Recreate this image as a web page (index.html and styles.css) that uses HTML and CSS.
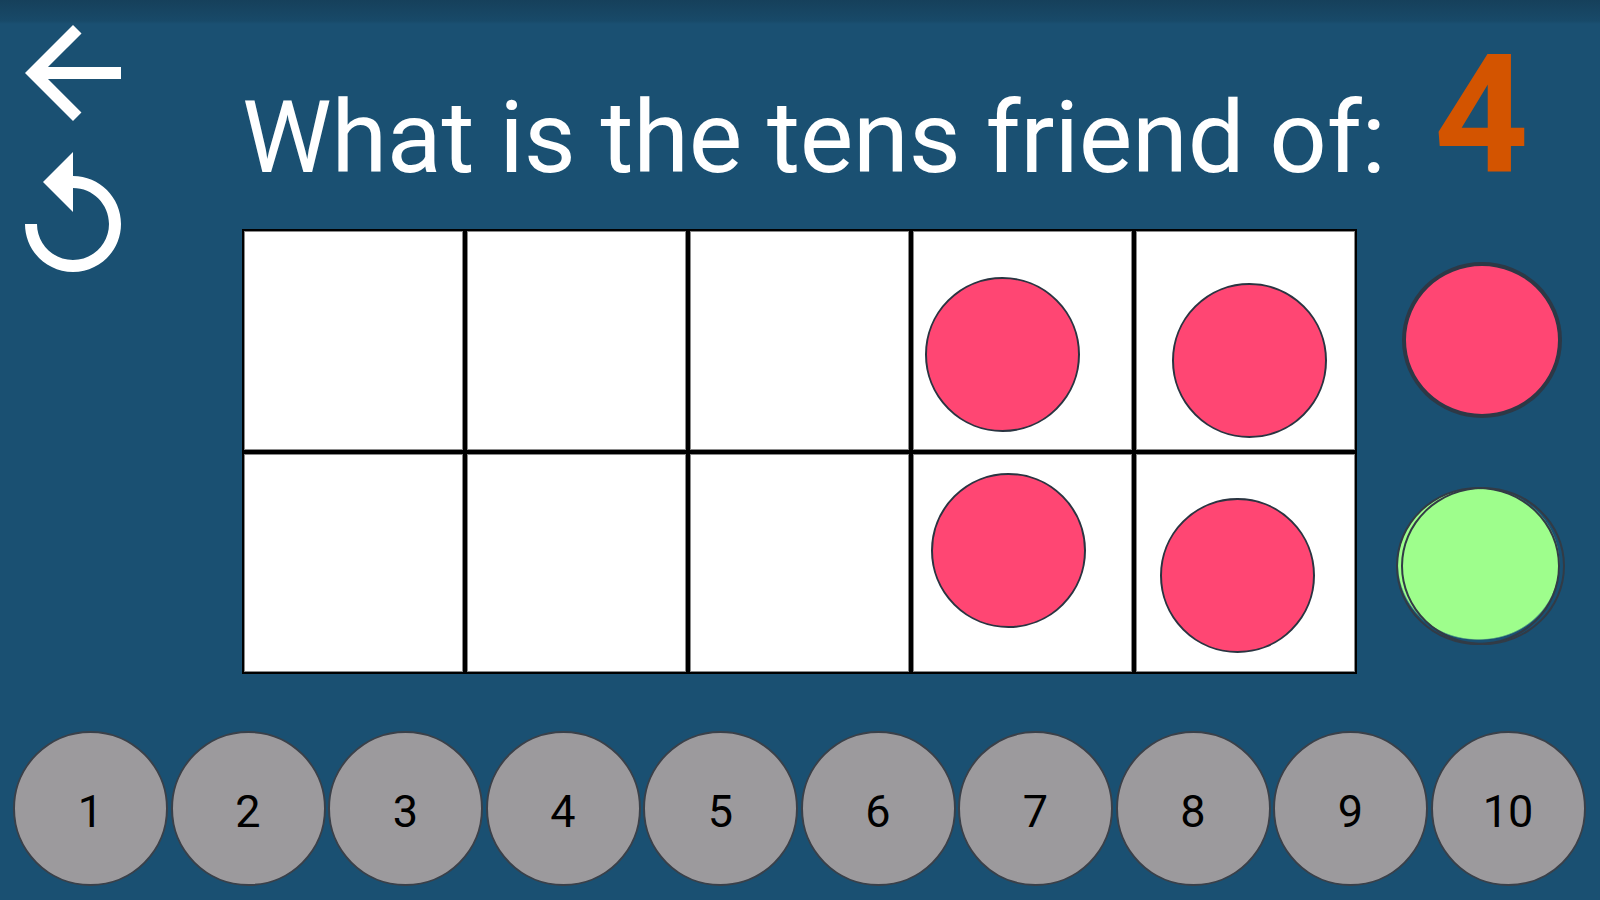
FILE: index.html
```html
<!DOCTYPE html>
<html lang="en">
<head>
  <meta charset="UTF-8">
  <meta name="viewport" content="width=device-width, initial-scale=1">
  <title>Tens Friend</title>
  <link rel="stylesheet" href="styles.css">
</head>
<body>

  <div class="screen">

    <!-- Ferramentas da esquerda -->
    <div class="tools">
      <button class="tool-btn" aria-label="Back">
        <svg viewBox="0 0 24 24" width="144" height="144"><path fill="#fff" d="M20 11H7.83l5.59-5.59L12 4l-8 8 8 8 1.41-1.41L7.83 13H20v-2z"/></svg>
      </button>
      <button class="tool-btn" aria-label="Replay">
        <svg viewBox="0 0 24 24" width="144" height="144"><path fill="#fff" d="M12 5V1L7 6l5 5V7c3.31 0 6 2.69 6 6s-2.69 6-6 6-6-2.69-6-6H4c0 4.42 3.58 8 8 8s8-3.58 8-8-3.58-8-8-8z"/></svg>
      </button>
    </div>

    <!-- Pergunta -->
    <div class="question">
      <span class="question-text">What is the tens friend of:</span>
      <span class="question-num">4</span>
    </div>

    <!-- Ten frame -->
    <div class="ten-frame">
      <div class="cell"></div>
      <div class="cell"></div>
      <div class="cell"></div>
      <div class="cell"><span class="counter" style="left: 12px; top: 46px;"></span></div>
      <div class="cell"><span class="counter" style="left: 36px; top: 52px;"></span></div>
      <div class="cell"></div>
      <div class="cell"></div>
      <div class="cell"></div>
      <div class="cell"><span class="counter" style="left: 18px; top: 19px;"></span></div>
      <div class="cell"><span class="counter" style="left: 24px; top: 44px;"></span></div>
    </div>

    <!-- Fichas -->
    <div class="supply">
      <span class="chip chip-red"></span>
      <span class="chip chip-green"></span>
    </div>

    <!-- Respostas -->
    <div class="answers">
      <button class="answer">1</button>
      <button class="answer">2</button>
      <button class="answer">3</button>
      <button class="answer">4</button>
      <button class="answer">5</button>
      <button class="answer">6</button>
      <button class="answer">7</button>
      <button class="answer">8</button>
      <button class="answer">9</button>
      <button class="answer">10</button>
    </div>

  </div>

</body>
</html>
```

FILE: styles.css
```css
/* Reset */
* { margin: 0; padding: 0; box-sizing: border-box; }
body {
  font-family: 'Roboto', 'Liberation Sans', sans-serif;
  background: #1a5072;
  overflow: hidden;
}
button { font-family: inherit; border: none; background: none; cursor: pointer; }

/* Tela principal */
.screen {
  width: 1600px;
  height: 900px;
  display: grid;
  grid-template-columns: 242px 1115px 1fr;
  grid-template-rows: 229px 445px 1fr;
  background: linear-gradient(to bottom, #16405b 0, #184a69 21px, #1a5072 24px, #1a5072 100%);
}

/* Ferramentas */
.tools {
  grid-column: 1;
  grid-row: 1 / 3;
  display: flex;
  flex-direction: column;
  padding: 1px 0 0 1px;
}
.tool-btn { width: 144px; height: 144px; display: block; }
.tool-btn svg { display: block; }
.tool-btn + .tool-btn { margin-top: 1px; }

/* Pergunta */
.question {
  grid-column: 2 / 4;
  grid-row: 1;
  display: flex;
  align-items: baseline;
  padding-top: 33px;
  color: #fff;
}
.question-text {
  font-size: 101px;
  line-height: 1;
  letter-spacing: -0.2px;
}
.question-num {
  font-size: 165px;
  font-weight: bold;
  line-height: 1;
  color: #d35400;
  margin-left: 48px;
}

/* Ten frame */
.ten-frame {
  grid-column: 2;
  grid-row: 2;
  display: grid;
  grid-template-columns: repeat(5, 1fr);
  grid-template-rows: repeat(2, 1fr);
  background: #fff;
}
.cell {
  position: relative;
  border: 2px solid #000;
  box-shadow: inset 0 0 0 1px #8a8a8a;
  background: #fff;
}
.counter {
  position: absolute;
  width: 155px;
  height: 155px;
  border-radius: 50%;
  background: #ff4673;
  border: 2px solid #2a3441;
}

/* Fichas */
.supply {
  grid-column: 3;
  grid-row: 2;
  display: flex;
  flex-direction: column;
  align-items: center;
  gap: 69px;
  padding-top: 33px;
}
.chip {
  display: block;
  border-radius: 50%;
  position: relative;
}
.chip-red {
  width: 160px;
  height: 156px;
  margin-left: 6px;
  background: #ff4673;
  border: 4px solid #2d3846;
}
/* duas fichas verdes empilhadas, levemente deslocadas */
.chip-green {
  width: 165px;
  height: 154px;
  border-radius: 0;
  background:
    radial-gradient(ellipse 79px 76px at 80px 77px, #9efe8c 98%, transparent 100%),
    radial-gradient(ellipse 79px 76px at 85px 77px, #9efe8c 98%, transparent 100%);
}
.chip-green::before,
.chip-green::after {
  content: "";
  position: absolute;
  top: 0;
  width: 160px;
  height: 154px;
  border-radius: 50%;
  border: 2px solid #323b46;
}
.chip-green::before { left: 0; }
.chip-green::after { left: 5px; }

/* Respostas */
.answers {
  grid-column: 1 / 4;
  grid-row: 3;
  display: flex;
  gap: 2.5px;
  padding: 57px 0 0 13px;
}
.answer {
  width: 155px;
  height: 155px;
  flex: none;
  border-radius: 50%;
  background: #9c9a9d;
  border: 2px solid #3a4049;
  color: #000;
  font-size: 45px;
  display: flex;
  align-items: center;
  justify-content: center;
  padding-top: 5px;
}
```
